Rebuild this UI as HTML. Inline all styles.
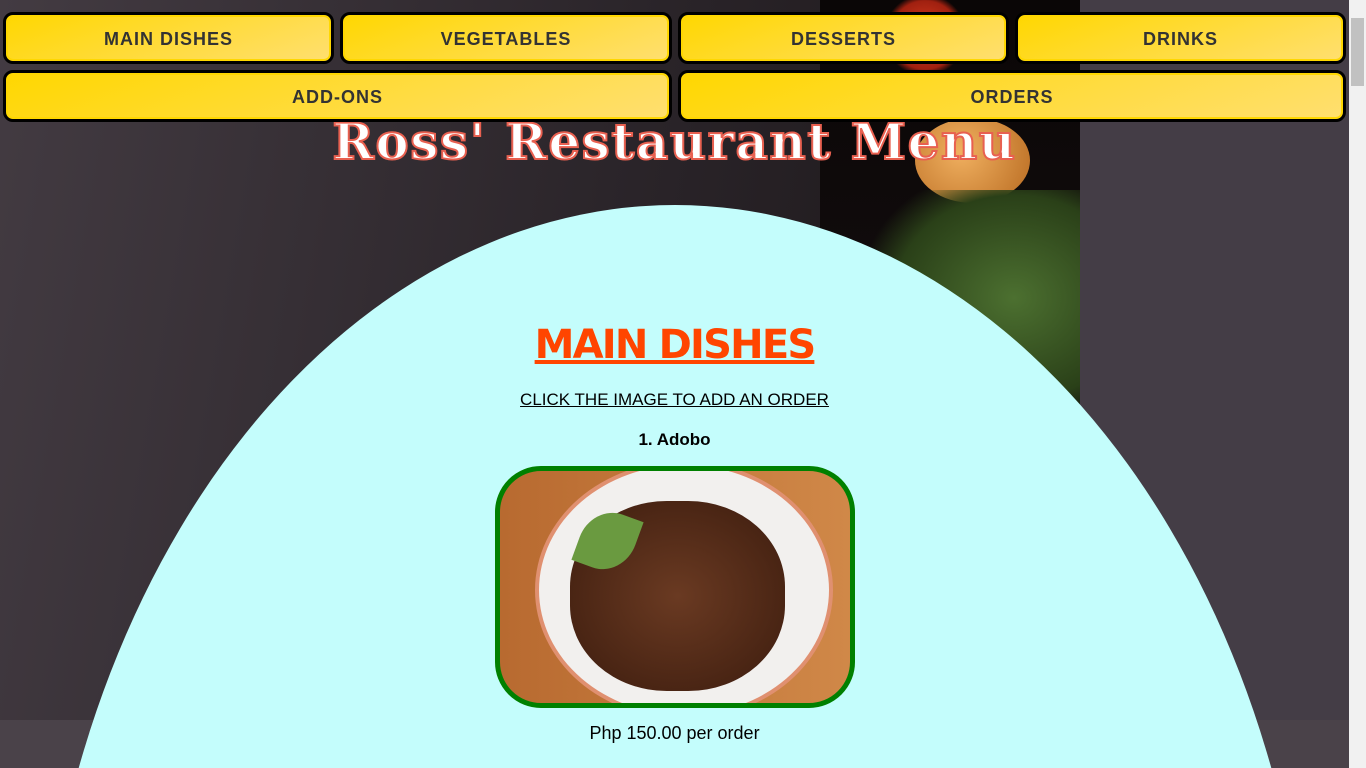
<!DOCTYPE html>
<html><head><meta charset="utf-8"><style>
html,body{margin:0;padding:0;width:1366px;height:768px;overflow:hidden;font-family:"Liberation Sans",sans-serif}
#w{position:relative;width:1366px;height:768px;overflow:hidden}
.bg{position:absolute;left:0;top:0;width:1349px;height:768px;background:linear-gradient(100deg,#433b42 0%,#2a2429 45%,#1c1719 75%)}
.bot{position:absolute;left:0;top:720px;width:1349px;height:48px;background:#4a4249}
.panel{position:absolute;left:820px;top:0;width:260px;height:720px;background:linear-gradient(180deg,#0a0606,#140f10 60%,#231d20)}
.right{position:absolute;left:1080px;top:0;width:269px;height:720px;background:#443d46}
.sb{position:absolute;left:1349px;top:0;width:17px;height:768px;background:#f1f1f1}
.sb i{position:absolute;left:2px;top:18px;width:13px;height:68px;background:#c1c1c1}
.btn{position:absolute;box-sizing:border-box;border:3px solid #000;border-radius:10px;background:linear-gradient(160deg,#ffd700,#ffdf70);box-shadow:inset 0 0 0 2px #ffd700;font:bold 18px "Liberation Sans",sans-serif;letter-spacing:1px;color:#333;text-align:center;line-height:48px;height:52px}
.arc{position:absolute;left:35px;top:205px;width:1280px;height:1768px;border-radius:50%;background:#c4fdfc}
h1{position:absolute;left:0;width:1349px;top:110px;margin:0;text-align:center;font:bold 50px "DejaVu Serif","Liberation Serif",serif;color:#fff;-webkit-text-stroke:2px #e86050;line-height:64px;letter-spacing:1.5px}
.c{position:absolute;left:0;width:1349px;text-align:center}
</style></head><body><div id="w">
<div class="bg"></div><div class="bot"></div><div class="panel"></div><div class="right"></div>
<div style="position:absolute;left:915px;top:118px;width:115px;height:85px;border-radius:50%;background:radial-gradient(circle at 40% 40%,#f0b060,#b86a20)"></div>
<div style="position:absolute;left:860px;top:190px;width:220px;height:240px;background:radial-gradient(ellipse at 70% 45%,#4c7030,#2a4018 55%,transparent 72%)"></div>
<div style="position:absolute;left:880px;top:0;width:90px;height:70px;background:radial-gradient(circle,#e04020,#a02010 60%,transparent 72%)"></div>
<div class="arc"></div>
<h1>Ross' Restaurant Menu</h1>
<div class="btn" style="left:3px;top:12px;width:331px">MAIN DISHES</div>
<div class="btn" style="left:340px;top:12px;width:332px">VEGETABLES</div>
<div class="btn" style="left:678px;top:12px;width:331px">DESSERTS</div>
<div class="btn" style="left:1015px;top:12px;width:331px">DRINKS</div>
<div class="btn" style="left:3px;top:70px;width:669px">ADD-ONS</div>
<div class="btn" style="left:678px;top:70px;width:668px">ORDERS</div>
<div class="c" style="top:322px;font:bold 40px 'DejaVu Sans',sans-serif;color:#ff4500;text-decoration:underline;letter-spacing:-1.8px">MAIN DISHES</div>
<div class="c" style="top:390px;font:17px 'Liberation Sans',sans-serif;text-decoration:underline;color:#000">CLICK THE IMAGE TO ADD AN ORDER</div>
<div class="c" style="top:430px;font:bold 17px 'Liberation Sans',sans-serif">1. Adobo</div>
<div style="position:absolute;left:495px;top:466px;width:350px;height:232px;border:5px solid #008000;border-radius:46px;overflow:hidden;background:linear-gradient(90deg,#b86a30,#d08848)">
<div style="position:absolute;left:35px;top:-10px;width:290px;height:250px;border-radius:50%;background:#f2f0ee;border:4px solid #e09070"></div>
<div style="position:absolute;left:70px;top:30px;width:215px;height:190px;border-radius:45%;background:radial-gradient(ellipse,#6a3a22,#4a2514 70%,#3a1c0e)"></div>
<div style="position:absolute;left:80px;top:40px;width:55px;height:60px;border-radius:60% 0;background:#6a9a40;transform:rotate(20deg)"></div>
</div>
<div class="c" style="top:723px;font:18px 'Liberation Sans',sans-serif">Php 150.00 per order</div>
<div class="sb"><i></i></div>
</div></body></html>
